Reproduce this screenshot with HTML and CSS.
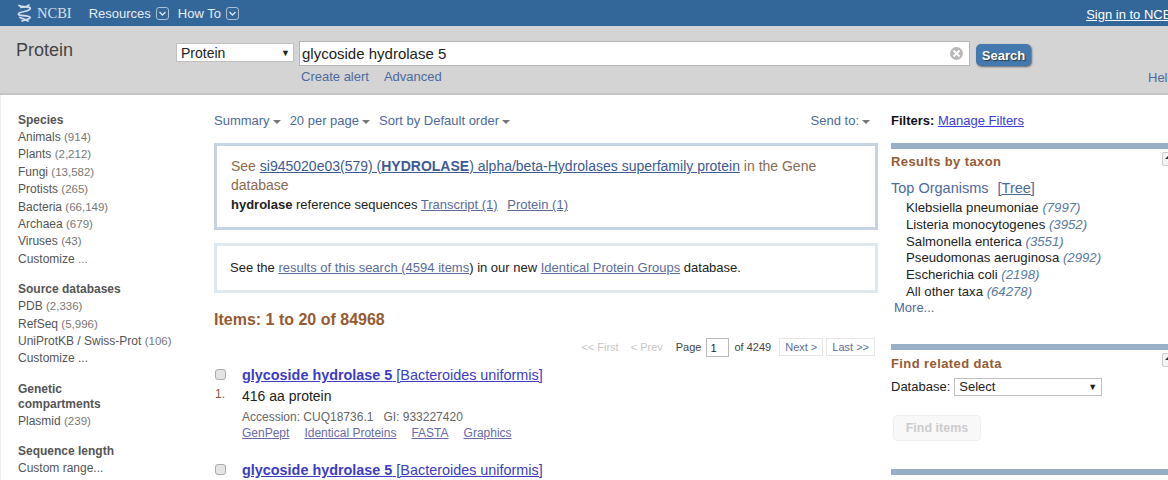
FILE: index.html
```html
<!DOCTYPE html>
<html lang="en">
<head>
  <meta charset="UTF-8" />
  <title>glycoside hydrolase 5 - Protein - NCBI</title>
  <link rel="stylesheet" href="styles.css">
</head>
<body>
  <header class="topbar">
    <a class="logo" href="#">
      <svg width="15" height="18" viewBox="0 0 15 18" fill="none" stroke="#d3e0ec" stroke-width="1.7" stroke-linecap="round">
        <path d="M2 1.500c3 2.200 9 .8 11 2.200 1.200 1-1 3-5.500 3.800C3 8.300 1 9.300 1.500 10.500c.8 1.500 9.500.5 11.500 2.500 1 1.200-3 3-8 3.800"/>
        <path d="M12 1c-1 1-5 2-8 2.500M3 13.500c2 1 5 1.500 8 3.500"/>
      </svg>
      <span>NCBI</span>
    </a>
    <a class="topmenu" href="#">Resources <span class="chev"><svg width="11" height="11" viewBox="0 0 11 11" fill="none" stroke="#dbe6f0" stroke-width="1.300"><path d="M2.500 4l3 3 3-3"/></svg></span></a>
    <a class="topmenu" href="#">How To <span class="chev"><svg width="11" height="11" viewBox="0 0 11 11" fill="none" stroke="#dbe6f0" stroke-width="1.300"><path d="M2.500 4l3 3 3-3"/></svg></span></a>
    <a class="signin" href="#">Sign in to NCBI</a>
  </header>

  <section class="searchbar">
    <div class="dbtitle">Protein</div>
    <div class="searchform">
      <div class="searchrow">
        <div class="fakeselect dbselect"><span>Protein</span><i>▼</i></div>
        <div class="termbox">
          <span>glycoside hydrolase 5</span>
          <span class="clear"><svg width="9" height="9" viewBox="0 0 9 9" stroke="#fff" stroke-width="1.800"><path d="M1.500 1.500l6 6M7.500 1.500l-6 6"/></svg></span>
        </div>
        <button class="searchbtn" type="button">Search</button>
      </div>
      <div class="searchlinks">
        <a href="#">Create alert</a>
        <a href="#">Advanced</a>
      </div>
    </div>
    <a class="helplink" href="#">Help</a>
  </section>

  <div class="content">
    <aside class="facets">
      <div class="facet">
        <h3>Species</h3>
        <ul>
          <li>Animals <span>(914)</span></li>
          <li>Plants <span>(2,212)</span></li>
          <li>Fungi <span>(13,582)</span></li>
          <li>Protists <span>(265)</span></li>
          <li>Bacteria <span>(66,149)</span></li>
          <li>Archaea <span>(679)</span></li>
          <li>Viruses <span>(43)</span></li>
          <li>Customize <span>...</span></li>
        </ul>
      </div>
      <div class="facet">
        <h3>Source databases</h3>
        <ul>
          <li>PDB <span>(2,336)</span></li>
          <li>RefSeq <span>(5,996)</span></li>
          <li>UniProtKB / Swiss-Prot <span>(106)</span></li>
          <li>Customize ...</li>
        </ul>
      </div>
      <div class="facet">
        <h3>Genetic compartments</h3>
        <ul>
          <li>Plasmid <span>(239)</span></li>
        </ul>
      </div>
      <div class="facet">
        <h3>Sequence length</h3>
        <ul>
          <li>Custom range...</li>
        </ul>
      </div>
    </aside>

    <main class="results">
      <div class="toolbar">
        <a href="#">Summary<i class="caret"></i></a>
        <a href="#">20 per page<i class="caret"></i></a>
        <a href="#">Sort by Default order<i class="caret"></i></a>
        <a class="sendto" href="#">Send to:<i class="caret"></i></a>
      </div>

      <div class="notice notice-gene">
        <p class="brown">See <a class="strong-link" href="#">si945020e03(579) (<b>HYDROLASE</b>) alpha/beta-Hydrolases superfamily protein</a> in the Gene database</p>
        <p><b>hydrolase</b> reference sequences <a href="#">Transcript (1)</a> <a class="gap" href="#">Protein (1)</a></p>
      </div>

      <div class="notice notice-ipg">
        <p>See the <a href="#">results of this search (4594 items</a>) in our new <a href="#">Identical Protein Groups</a> database.</p>
      </div>

      <h2 class="count">Items: 1 to 20 of 84968</h2>

      <div class="pager">
        <span class="off">&lt;&lt; First</span>
        <span class="off">&lt; Prev</span>
        <span class="pagelabel">Page</span>
        <span class="pagebox">1</span>
        <span class="pagetotal">of 4249</span>
        <a class="pagebtn" href="#">Next &gt;</a>
        <a class="pagebtn" href="#">Last &gt;&gt;</a>
      </div>

      <article class="rslt">
        <div class="rslt-side"><span class="check"></span><span class="num">1.</span></div>
        <div class="rslt-body">
          <h4><a href="#"><b>glycoside hydrolase 5</b> [Bacteroides uniformis]</a></h4>
          <p class="desc">416 aa protein</p>
          <p class="meta">Accession: CUQ18736.1 &nbsp; GI: 933227420</p>
          <p class="links"><a href="#">GenPept</a><a href="#">Identical Proteins</a><a href="#">FASTA</a><a href="#">Graphics</a></p>
        </div>
      </article>
      <article class="rslt">
        <div class="rslt-side"><span class="check"></span></div>
        <div class="rslt-body">
          <h4><a href="#"><b>glycoside hydrolase 5</b> [Bacteroides uniformis]</a></h4>
        </div>
      </article>
    </main>

    <aside class="filters">
      <div class="filterhead"><b>Filters:</b> <a href="#">Manage Filters</a></div>

      <section class="portlet">
        <h3>Results by taxon</h3>
        <span class="toggle"></span>
        <div class="topline">Top Organisms <span class="tree">[<a href="#">Tree</a>]</span></div>
        <ul class="taxa">
          <li>Klebsiella pneumoniae <em>(7997)</em></li>
          <li>Listeria monocytogenes <em>(3952)</em></li>
          <li>Salmonella enterica <em>(3551)</em></li>
          <li>Pseudomonas aeruginosa <em>(2992)</em></li>
          <li>Escherichia coli <em>(2198)</em></li>
          <li>All other taxa <em>(64278)</em></li>
        </ul>
        <a class="more" href="#">More...</a>
      </section>

      <section class="portlet related">
        <h3>Find related data</h3>
        <span class="toggle"></span>
        <div class="dbrow">Database: <div class="fakeselect relselect"><span>Select</span><i>▼</i></div></div>
        <button class="finditems" type="button">Find items</button>
      </section>

      <section class="portlet last"></section>
    </aside>
  </div>
</body>
</html>
```

FILE: styles.css
```css
html, body {
  height: 480px;
  overflow: hidden;
}
body {
  margin: 0;
  width: 1168px;
  background-color: #ffffff;
  color: #222222;
  font-family: "Liberation Sans", Arial, sans-serif;
  font-size: 13px;
}
a {
  color: #5b6b9a;
}
p, h2, h3, h4, ul {
  margin: 0;
  padding: 0;
}
ul {
  list-style: none;
}

/* top bar */
.topbar {
  display: flex;
  align-items: center;
  height: 26px;
  background-color: #336699;
  color: #ffffff;
  white-space: nowrap;
}
.logo {
  display: flex;
  align-items: center;
  gap: 5px;
  margin-left: 17px;
  margin-right: 17px;
  color: #d3e0ec;
  font-family: "Liberation Serif", serif;
  font-size: 14.500px;
  text-decoration: none;
}
.topmenu {
  display: flex;
  align-items: center;
  gap: 5px;
  margin-right: 9px;
  color: #e6edf4;
  font-size: 13px;
  text-decoration: none;
}
.chev {
  display: flex;
  box-sizing: border-box;
  width: 13px;
  height: 13px;
  align-items: center;
  justify-content: center;
  border: 1px solid #a9c0d6;
  border-radius: 3px;
}
.signin {
  margin-left: auto;
  margin-right: -7px;
  padding-top: 3px;
  color: #ffffff;
  font-size: 13px;
}

/* search band */
.searchbar {
  position: relative;
  display: flex;
  box-sizing: border-box;
  height: 69px;
  background-color: #d4d4d4;
  border-bottom: 2px solid #c4c4c4;
}
.dbtitle {
  width: 176px;
  padding: 14px 0 0 16px;
  box-sizing: border-box;
  color: #444444;
  font-size: 18px;
}
.searchform {
  padding-top: 15px;
}
.searchrow {
  display: flex;
  align-items: flex-start;
}
.fakeselect {
  display: flex;
  box-sizing: border-box;
  align-items: center;
  justify-content: space-between;
  background-color: #ffffff;
  border: 1px solid #c0c0c0;
  color: #222222;
}
.fakeselect i {
  font-size: 9px;
  font-style: normal;
}
.dbselect {
  width: 118px;
  height: 19px;
  margin-top: 2px;
  padding: 0 3px 0 4px;
  font-size: 14px;
}
.termbox {
  display: flex;
  box-sizing: border-box;
  align-items: center;
  justify-content: space-between;
  width: 671px;
  height: 25px;
  margin-left: 5px;
  padding: 0 6px 0 2px;
  background-color: #ffffff;
  border: 1px solid #b4b4b4;
  font-size: 15px;
}
.clear {
  display: flex;
  width: 13px;
  height: 13px;
  align-items: center;
  justify-content: center;
  border-radius: 50%;
  background-color: #b8b8b8;
}
.searchbtn {
  width: 55px;
  height: 22px;
  margin: 3px 0 0 6px;
  padding: 0;
  background-color: #4379ae;
  border: none;
  border-radius: 5px;
  box-shadow: 1px 1px 2px #666666;
  color: #ffffff;
  font-family: inherit;
  font-size: 13px;
  font-weight: bold;
  text-shadow: 1px 1px 1px #333333;
}
.searchlinks {
  display: flex;
  gap: 15px;
  margin-top: 3px;
  margin-left: 125px;
  font-size: 13px;
}
.searchlinks a, .helplink {
  color: #4d6a9c;
  text-decoration: none;
}
.helplink {
  position: absolute;
  left: 1148px;
  top: 44px;
  font-size: 13px;
}

/* three columns */
.content {
  display: flex;
  align-items: flex-start;
}

.facets {
  box-sizing: border-box;
  width: 214px;
  padding: 18px 0 0 17px;
  border-left: 1px solid #eeeeee;
  font-size: 12px;
  color: #555555;
}
.facet {
  margin-bottom: 14px;
  width: 170px;
}
.facet h3 {
  width: 120px;
  margin-bottom: 1px;
  color: #555555;
  font-size: 12px;
  line-height: 15px;
}
.facet li {
  height: 17.400px;
  line-height: 17.400px;
  white-space: nowrap;
}
.facet li span {
  color: #777777;
  font-size: 11.500px;
}

.results {
  box-sizing: border-box;
  width: 664px;
}
.toolbar {
  display: flex;
  gap: 9px;
  padding-top: 17px;
  height: 48px;
  box-sizing: border-box;
  font-size: 13px;
  line-height: 18px;
}
.toolbar a {
  color: #4d6a9c;
  text-decoration: none;
}
.caret {
  display: inline-block;
  margin-left: 3px;
  vertical-align: middle;
  border-top: 4px solid #777777;
  border-left: 4px solid transparent;
  border-right: 4px solid transparent;
}
.sendto {
  margin-left: auto;
  margin-right: 8px;
}

.notice {
  box-sizing: border-box;
  background-color: #ffffff;
}
.notice-gene {
  height: 87px;
  padding: 11px 14px 0;
  border: 3px solid #c5d4e3;
}
.notice-gene p {
  font-size: 13px;
  line-height: 19px;
}
.notice-gene .brown {
  font-size: 14px;
  color: #8a6a50;
}
.notice-ipg {
  height: 50px;
  margin-top: 13px;
  padding: 13px 13px 0;
  border: 3px solid #dfe7ef;
  font-size: 13px;
  line-height: 18px;
}
.strong-link {
  color: #3d5a94;
}
.gap {
  margin-left: 6px;
}

.count {
  margin-top: 17px;
  color: #965a32;
  font-size: 16px;
  line-height: 20px;
}

.pager {
  display: flex;
  align-items: center;
  justify-content: flex-end;
  gap: 5px;
  height: 20px;
  margin-top: 7px;
  margin-right: 3px;
  font-size: 11px;
  color: #444444;
}
.off {
  margin-right: 7px;
  color: #c8c8c8;
}
.pagebox {
  box-sizing: border-box;
  width: 23px;
  height: 19px;
  padding: 3px 0 0 3px;
  border: 1px solid #bbbbbb;
  color: #222222;
}
.pagelabel {
  margin-left: 1px;
}
.pagetotal {
  margin-right: 3px;
}
.pagebtn {
  padding: 2px 5px;
  border: 1px solid #e6e6e6;
  color: #5b6f96;
  text-decoration: none;
}
.pagebtn + .pagebtn {
  margin-left: -2px;
}

.rslt {
  display: flex;
  margin-top: 9px;
}
.rslt + .rslt {
  margin-top: 20px;
}
.rslt-side {
  display: flex;
  flex-direction: column;
  width: 28px;
  padding-top: 3px;
}
.check {
  box-sizing: border-box;
  width: 11px;
  height: 11px;
  margin-left: 1px;
  background-color: #e4e4e4;
  border: 1px solid #aaaaaa;
  border-radius: 3px;
}
.num {
  margin-top: 7px;
  margin-left: 1px;
  color: #7a5a44;
  font-size: 12px;
}
.rslt-body h4 {
  font-size: 14.400px;
  font-weight: normal;
  line-height: 18px;
}
.rslt-body h4 a {
  color: #3c3cc4;
}
.desc {
  margin-top: 3px;
  font-size: 14px;
  line-height: 18px;
}
.meta {
  margin-top: 4px;
  color: #666666;
  font-size: 12px;
  line-height: 17px;
}
.links {
  display: flex;
  gap: 15px;
  font-size: 12px;
  line-height: 15px;
}
.links a {
  color: #6a6aa8;
}

/* right column */
.filters {
  box-sizing: border-box;
  width: 290px;
  margin-left: 13px;
  flex-shrink: 0;
  margin-right: -13px;
}
.filterhead {
  height: 48px;
  padding-top: 18px;
  box-sizing: border-box;
  font-size: 13px;
  line-height: 16px;
  color: #111111;
}
.filterhead a {
  color: #3c3ce0;
}
.portlet {
  position: relative;
  border-top: 6px solid #97b0c8;
}
.portlet h3 {
  padding-top: 5px;
  color: #965a32;
  font-size: 13px;
  line-height: 16px;
  letter-spacing: 0.400px;
}
.related h3 {
  padding-top: 6px;
}
.toggle {
  position: absolute;
  left: 271px;
  top: 3px;
  width: 14px;
  height: 12px;
  background-color: #f4f4f4;
  border: 1px solid #cccccc;
  border-radius: 2px;
}
.toggle::after {
  content: "";
  position: absolute;
  left: 2px;
  top: 2px;
  border-bottom: 4px solid #333333;
  border-left: 4px solid transparent;
  border-right: 4px solid transparent;
}
.topline {
  margin-top: 9px;
  color: #4d6a9c;
  font-size: 14.500px;
  line-height: 18px;
}
.tree {
  margin-left: 5px;
}
.tree a {
  color: #4d6a9c;
}
.taxa {
  margin-left: 15px;
  margin-top: 3px;
  font-size: 13.200px;
  line-height: 16.800px;
}
.taxa em {
  color: #5a7aa0;
}
.more {
  display: block;
  margin-top: -1px;
  margin-left: 3px;
  color: #4d6a9c;
  font-size: 13px;
  line-height: 16px;
  text-decoration: none;
}
.related {
  margin-top: 28px;
}
.dbrow {
  display: flex;
  align-items: center;
  gap: 4px;
  margin-top: 6px;
  font-size: 13px;
}
.relselect {
  width: 148px;
  height: 18px;
  padding: 0 4px 0 4px;
  font-size: 13px;
}
.finditems {
  display: block;
  width: 88px;
  height: 26px;
  margin: 19px 0 0 2px;
  background-color: #f8f8f8;
  border: 1px solid #eeeeee;
  border-radius: 4px;
  color: #cccccc;
  font-family: inherit;
  font-size: 12.500px;
  font-weight: bold;
}
.last {
  margin-top: 28px;
}
```
